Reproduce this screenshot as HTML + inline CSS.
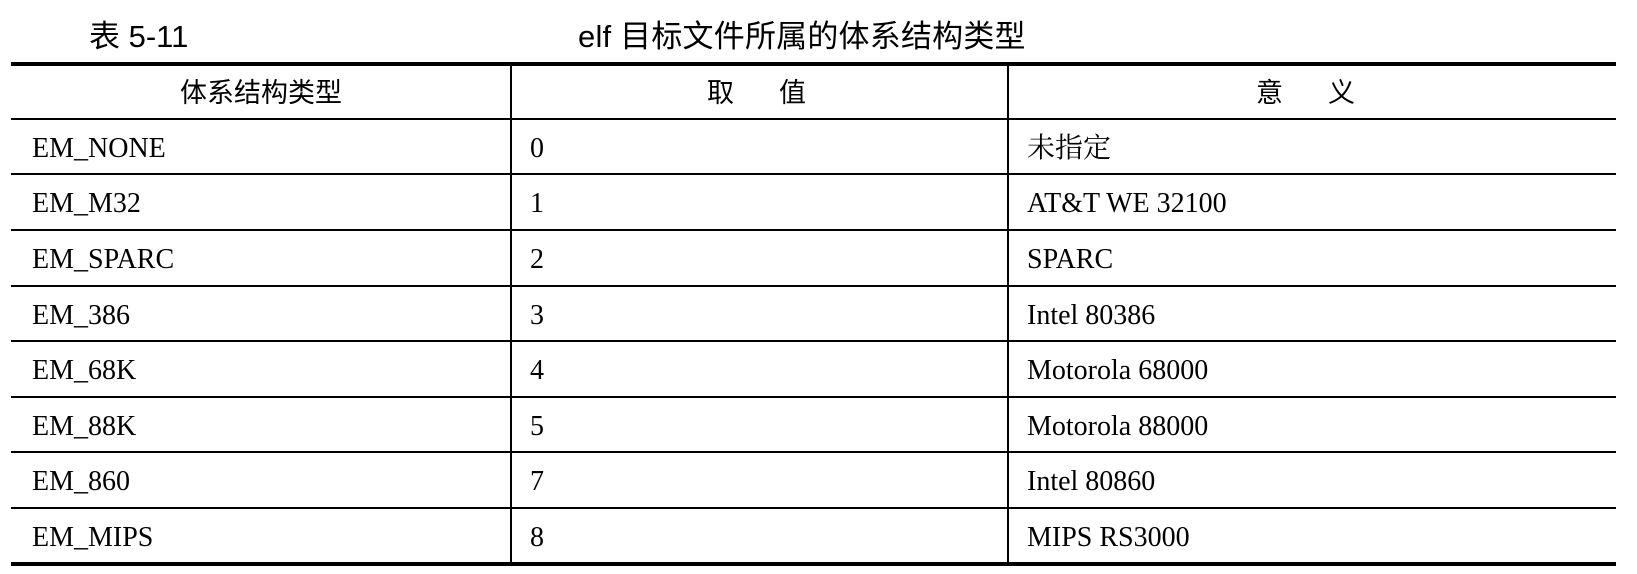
<!DOCTYPE html>
<html><head><meta charset="utf-8"><style>
html,body{margin:0;padding:0;background:#fff;}
body{width:1637px;height:574px;position:relative;overflow:hidden;color:#000;}
.s{font-family:"Liberation Sans","Noto Sans CJK SC",sans-serif;position:absolute;white-space:nowrap;}
.t{font-family:"Liberation Serif","Noto Serif CJK SC",serif;position:absolute;white-space:nowrap;font-size:28px;line-height:34px;}
.h{position:absolute;background:#000;left:11px;width:1605px;}
.v{position:absolute;background:#000;width:2px;top:64px;height:500px;}
</style></head><body>
<div class="s" style="left:89px;top:19px;font-size:31px;line-height:36px;">表 5-11</div>
<div class="s" style="left:578px;top:19px;font-size:31px;line-height:36px;letter-spacing:0.2px;">elf 目标文件所属的体系结构类型</div>
<div class="h" style="top:62px;height:4px;"></div>
<div class="h" style="top:118px;height:2px;"></div>
<div class="h" style="top:173px;height:2px;"></div>
<div class="h" style="top:229px;height:2px;"></div>
<div class="h" style="top:285px;height:2px;"></div>
<div class="h" style="top:340px;height:2px;"></div>
<div class="h" style="top:396px;height:2px;"></div>
<div class="h" style="top:451px;height:2px;"></div>
<div class="h" style="top:507px;height:2px;"></div>
<div class="h" style="top:562px;height:4px;"></div>
<div class="v" style="left:510px;"></div>
<div class="v" style="left:1007px;"></div>
<div class="s" style="left:180px;top:76px;font-size:27px;line-height:34px;">体系结构类型</div>
<div class="s" style="left:707px;top:76px;font-size:27px;line-height:34px;">取&nbsp;&nbsp;&nbsp;&nbsp;&nbsp;&nbsp;值</div>
<div class="s" style="left:1256px;top:76px;font-size:27px;line-height:34px;">意&nbsp;&nbsp;&nbsp;&nbsp;&nbsp;&nbsp;义</div>

<div class="t" style="left:32px;top:132px;">EM_NONE</div>
<div class="t" style="left:530px;top:132px;">0</div>
<div class="t" style="left:1027px;top:132px;">未指定</div>

<div class="t" style="left:32px;top:187px;">EM_M32</div>
<div class="t" style="left:530px;top:187px;">1</div>
<div class="t" style="left:1027px;top:187px;">AT&amp;T WE 32100</div>

<div class="t" style="left:32px;top:243px;">EM_SPARC</div>
<div class="t" style="left:530px;top:243px;">2</div>
<div class="t" style="left:1027px;top:243px;">SPARC</div>

<div class="t" style="left:32px;top:299px;">EM_386</div>
<div class="t" style="left:530px;top:299px;">3</div>
<div class="t" style="left:1027px;top:299px;">Intel 80386</div>

<div class="t" style="left:32px;top:354px;">EM_68K</div>
<div class="t" style="left:530px;top:354px;">4</div>
<div class="t" style="left:1027px;top:354px;">Motorola 68000</div>

<div class="t" style="left:32px;top:410px;">EM_88K</div>
<div class="t" style="left:530px;top:410px;">5</div>
<div class="t" style="left:1027px;top:410px;">Motorola 88000</div>

<div class="t" style="left:32px;top:465px;">EM_860</div>
<div class="t" style="left:530px;top:465px;">7</div>
<div class="t" style="left:1027px;top:465px;">Intel 80860</div>

<div class="t" style="left:32px;top:521px;">EM_MIPS</div>
<div class="t" style="left:530px;top:521px;">8</div>
<div class="t" style="left:1027px;top:521px;">MIPS RS3000</div>
</body></html>
